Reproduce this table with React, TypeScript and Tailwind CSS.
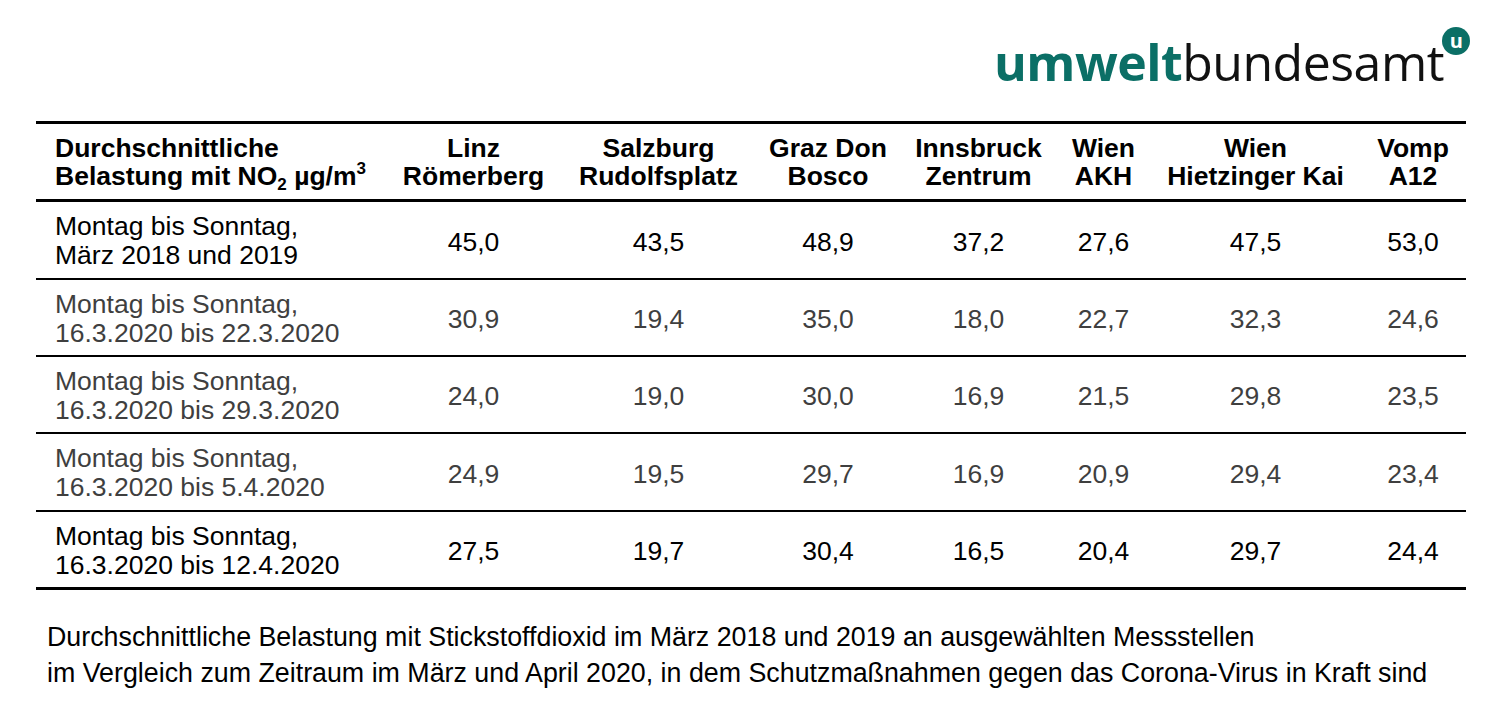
import React from 'react';

const cols = 'grid grid-cols-[349px_177px_193px_146px_155px_95px_209px_106px] items-center';

type Row = { label: [string, string]; values: string[]; muted?: boolean; h: string };

const rows: Row[] = [
  { label: ['Montag bis Sonntag,', 'März 2018 und 2019'], values: ['45,0', '43,5', '48,9', '37,2', '27,6', '47,5', '53,0'], h: 'h-[78px]' },
  { label: ['Montag bis Sonntag,', '16.3.2020 bis 22.3.2020'], values: ['30,9', '19,4', '35,0', '18,0', '22,7', '32,3', '24,6'], muted: true, h: 'h-[77px]' },
  { label: ['Montag bis Sonntag,', '16.3.2020 bis 29.3.2020'], values: ['24,0', '19,0', '30,0', '16,9', '21,5', '29,8', '23,5'], muted: true, h: 'h-[77px]' },
  { label: ['Montag bis Sonntag,', '16.3.2020 bis 5.4.2020'], values: ['24,9', '19,5', '29,7', '16,9', '20,9', '29,4', '23,4'], muted: true, h: 'h-[78px]' },
  { label: ['Montag bis Sonntag,', '16.3.2020 bis 12.4.2020'], values: ['27,5', '19,7', '30,4', '16,5', '20,4', '29,7', '24,4'], h: 'h-[78px]' },
];

const stations: [string, string][] = [
  ['Linz', 'Römerberg'],
  ['Salzburg', 'Rudolfsplatz'],
  ['Graz Don', 'Bosco'],
  ['Innsbruck', 'Zentrum'],
  ['Wien', 'AKH'],
  ['Wien', 'Hietzinger Kai'],
  ['Vomp', 'A12'],
];

function Logo() {
  return (
    <div className="relative flex items-baseline pr-[26px] font-['Open_Sans',sans-serif] text-[50px] leading-none tracking-[-0.5px]">
      <span className="font-bold text-[#0b6f66]">umwelt</span>
      <span className="font-normal text-[#111]">bundesamt</span>
      {/* round badge with the u */}
      <span className="absolute right-0 top-[-10px] flex h-[28px] w-[28px] items-center justify-center rounded-full bg-[#0b6f66] text-[20px] font-bold leading-none text-white">
        u
      </span>
    </div>
  );
}

export default function App() {
  return (
    <div className="min-h-screen bg-white font-['Liberation_Sans',Arial,sans-serif] text-black">
      <div className="flex justify-end pr-[30px] pt-[37px]">
        <Logo />
      </div>

      <div className="ml-[36px] mt-[34px] w-[1430px] border-t-[3px] border-black">
        {/* header */}
        <div className={`${cols} h-[78px] border-b-[3px] border-black text-[26.5px] font-bold leading-[28px]`}>
          <div className="pl-[19px]">
            <div>Durchschnittliche</div>
            <div>
              Belastung mit NO<span className="relative top-[5px] text-[17px] leading-none">2</span> µg/m
              <span className="relative top-[-11px] text-[17px] leading-none">3</span>
            </div>
          </div>
          {stations.map(([a, b], i) => (
            <div key={i} className="text-center">
              <div>{a}</div>
              <div>{b}</div>
            </div>
          ))}
        </div>

        {rows.map((row, i) => (
          <div
            key={i}
            className={`${cols} ${row.h} ${i === rows.length - 1 ? 'border-b-[3px]' : 'border-b-[2px]'} border-black text-[26.5px] leading-[29px] ${row.muted ? 'text-[#3f3f3f]' : 'text-black'}`}
          >
            <div className="pl-[19px] pt-[2px]">
              <div>{row.label[0]}</div>
              <div>{row.label[1]}</div>
            </div>
            {row.values.map((v, j) => (
              <div key={j} className="pt-[4px] text-center">
                {v}
              </div>
            ))}
          </div>
        ))}
      </div>

      <div className="ml-[47px] mt-[29px] text-[26.8px] leading-[36px]">
        <p>Durchschnittliche Belastung mit Stickstoffdioxid im März 2018 und 2019 an ausgewählten Messstellen</p>
        <p>im Vergleich zum Zeitraum im März und April 2020, in dem Schutzmaßnahmen gegen das Corona-Virus in Kraft sind</p>
      </div>
    </div>
  );
}
